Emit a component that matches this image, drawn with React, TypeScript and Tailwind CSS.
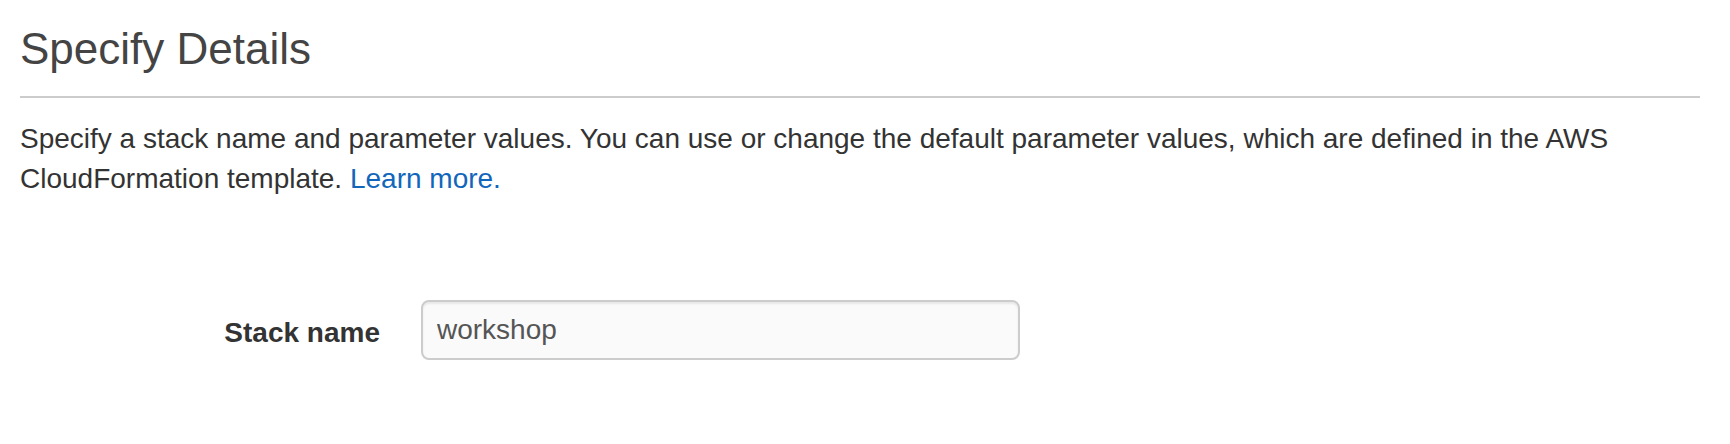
import React from "react";

export default function App() {
  return (
    <div
      className="w-[1730px] h-[444px] bg-white overflow-hidden"
      style={{ fontFamily: '"Liberation Sans", Arial, Helvetica, sans-serif' }}
    >
      <div className="ml-[20px] w-[1680px] pt-[27px]">
        <h2 className="text-[44px] leading-[44px] text-[#444444] font-normal pb-[25px] border-b-2 border-[#cccccc]">
          Specify Details
        </h2>
        <p className="mt-[21px] text-[28px] leading-[40px] text-[#333333]">
          Specify a stack name and parameter values. You can use or change the default parameter values, which are defined in the AWS
          <br />
          CloudFormation template.{" "}
          <a href="#" className="text-[#1166bb]">
            Learn more.
          </a>
        </p>
        <div className="mt-[101px] flex items-start gap-[41px]">
          <label className="w-[360px] text-right pt-[13px] text-[28px] leading-[40px] font-bold text-[#333333]">
            Stack name
          </label>
          <input
            type="text"
            defaultValue="workshop"
            className="w-[599px] h-[60px] px-[14px] text-[28px] text-[#555555] bg-[#fafafa] border-2 border-[#cccccc] rounded-[8px] shadow-[inset_0_2px_2px_rgba(0,0,0,0.075)] outline-none"
            style={{ fontFamily: '"Liberation Sans", Arial, Helvetica, sans-serif' }}
          />
        </div>
      </div>
    </div>
  );
}
